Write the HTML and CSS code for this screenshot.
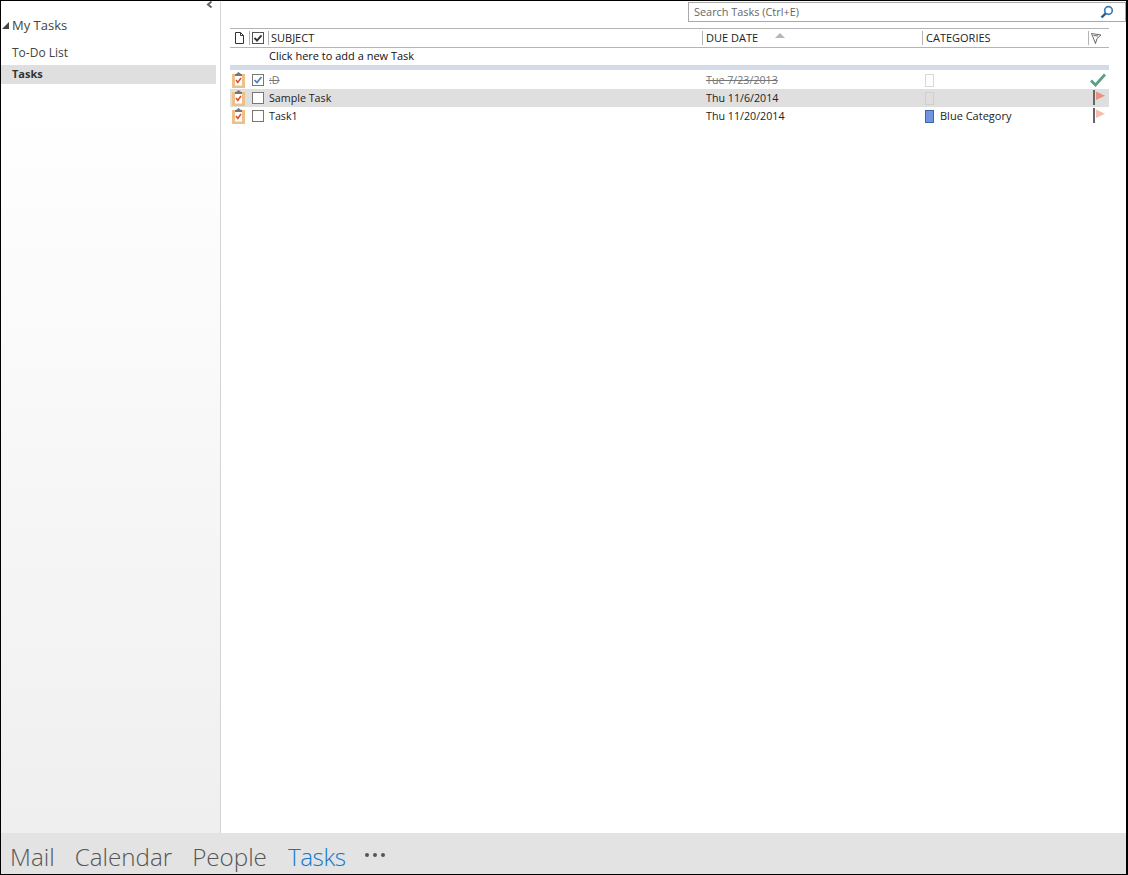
FILE: index.html
```html
<!DOCTYPE html>
<html lang="en">
<head>
    <meta charset="UTF-8">
    <title>Tasks</title>
    <link rel="stylesheet" href="styles.css">
</head>
<body>
    <div class="app">
        <div class="content">
            <aside class="sidebar">
                <div class="collapse-row">
                    <svg width="7" height="7" viewBox="0 0 7 7"><path d="M5.5 0.5 L2 3.5 L5.5 6.5" fill="none" stroke="#666" stroke-width="2"/></svg>
                </div>
                <div class="folder-title">
                    <svg width="7" height="7" viewBox="0 0 7 7"><path d="M0 7 L7 7 L7 0 Z" fill="#444"/></svg>
                    <span>My Tasks</span>
                </div>
                <div class="folder">To-Do List</div>
                <div class="folder active">Tasks</div>
            </aside>
            <main class="main">
                <div class="search-row">
                    <div class="search-box">
                        <span class="search-text">Search Tasks (Ctrl+E)</span>
                        <svg width="14" height="14" viewBox="0 0 14 14"><circle cx="8.5" cy="5.5" r="3.8" fill="none" stroke="#3f7cb5" stroke-width="1.7"/><path d="M5.7 8.3 L1.5 12.5" stroke="#1f5f9e" stroke-width="2.4"/></svg>
                    </div>
                </div>
                <div class="task-table">
                    <div class="row head">
                        <div class="cell cell-icon">
                            <svg width="11" height="12" viewBox="0 0 11 12"><path d="M1.5 0.5 H6.5 L9.5 3.5 V11.5 H1.5 Z M6.5 0.5 V3.5 H9.5" fill="#fff" stroke="#333"/></svg>
                        </div>
                        <div class="cell cell-check sep">
                            <svg width="12" height="12" viewBox="0 0 12 12"><rect x="0.5" y="0.5" width="11" height="11" fill="#fff" stroke="#555"/><path d="M2.5 6 L5 8.5 L9.5 3.3" fill="none" stroke="#333" stroke-width="1.9"/></svg>
                        </div>
                        <div class="cell cell-subject sep">SUBJECT</div>
                        <div class="cell cell-due sep">DUE DATE
                            <svg class="sort" width="10" height="5" viewBox="0 0 10 5"><path d="M0 5 L5 0 L10 5 Z" fill="#b4b6bb"/></svg>
                        </div>
                        <div class="cell cell-cat sep">CATEGORIES</div>
                        <div class="cell cell-flag sep">
                            <svg width="11" height="11" viewBox="0 0 11 11"><path d="M0.5 0.5 L10 2 L6 5.5 L4.5 10.5 Z M2.5 2.5 L7 3" fill="#fff" stroke="#444" stroke-width="0.8"/></svg>
                        </div>
                    </div>
                    <div class="add-row">Click here to add a new Task</div>
                    <div class="band"></div>
                    <div class="row task done">
                        <div class="cell cell-icon"><svg width="13" height="16" viewBox="0 0 13 16"><use href="#task-icon"/></svg></div>
                        <div class="cell cell-check"><span class="check"><svg width="10" height="10" viewBox="0 0 10 10"><path d="M1.5 5 L4 7.5 L8.5 2" fill="none" stroke="#4a7ebb" stroke-width="1.7"/></svg></span></div>
                        <div class="cell cell-subject">:D</div>
                        <div class="cell cell-due">Tue 7/23/2013</div>
                        <div class="cell cell-cat"><span class="swatch"></span></div>
                        <div class="cell cell-flag done-mark">
                            <svg width="16" height="14" viewBox="0 0 16 14"><path d="M1 7.5 L5.5 12 L15 1.5" fill="none" stroke="#5b9f84" stroke-width="2.8"/></svg>
                        </div>
                    </div>
                    <div class="row task selected">
                        <div class="cell cell-icon"><svg width="13" height="16" viewBox="0 0 13 16"><use href="#task-icon"/></svg></div>
                        <div class="cell cell-check"><span class="check"></span></div>
                        <div class="cell cell-subject">Sample Task</div>
                        <div class="cell cell-due">Thu 11/6/2014</div>
                        <div class="cell cell-cat"><span class="swatch"></span></div>
                        <div class="cell cell-flag">
                            <svg width="13" height="16" viewBox="0 0 13 16"><rect x="0" y="0" width="2" height="15" fill="#666"/><path d="M3 1.5 L12 5.8 L3 10 Z" fill="#e8927f"/></svg>
                        </div>
                    </div>
                    <div class="row task">
                        <div class="cell cell-icon"><svg width="13" height="16" viewBox="0 0 13 16"><use href="#task-icon"/></svg></div>
                        <div class="cell cell-check"><span class="check"></span></div>
                        <div class="cell cell-subject">Task1</div>
                        <div class="cell cell-due">Thu 11/20/2014</div>
                        <div class="cell cell-cat"><span class="swatch blue"></span><span class="cat-name">Blue Category</span></div>
                        <div class="cell cell-flag">
                            <svg width="13" height="16" viewBox="0 0 13 16"><rect x="0" y="0" width="2" height="15" fill="#666"/><path d="M3 1.5 L12 5.8 L3 10 Z" fill="#f5bdb0"/></svg>
                        </div>
                    </div>
                </div>
            </main>
        </div>
        <nav class="bottom-nav">
            <span>Mail</span>
            <span>Calendar</span>
            <span>People</span>
            <span class="current">Tasks</span>
            <span class="more"><i></i><i></i><i></i></span>
        </nav>
    </div>

    <svg class="defs" width="0" height="0">
        <symbol id="task-icon" viewBox="0 0 13 16">
            <rect x="0" y="2" width="13" height="14" fill="#ecc088"/>
            <rect x="3" y="4" width="7" height="9.5" fill="#fff"/>
            <path d="M4 2 L6.5 0 L9 2 Z" fill="#777"/>
            <rect x="3" y="2" width="7" height="2" fill="#777"/>
            <path d="M4 8 L5.8 10.5 L9 6" fill="none" stroke="#d9502e" stroke-width="1.6"/>
        </symbol>
    </svg>
</body>
</html>
```

FILE: styles.css
```css
html, body { margin: 0; padding: 0; }
body { font-family: "Open Sans", "Noto Sans", sans-serif; font-size: 11px; color: #222; background-color: #fff; }
.app { width: 1128px; height: 875px; box-sizing: border-box; border: 1px solid #000; border-width: 1px 2px 1px 1px; display: flex; flex-direction: column; overflow: hidden; }
.content { flex: 1; display: flex; min-height: 0; }
.defs { position: absolute; }

.sidebar { width: 220px; box-sizing: border-box; border-right: 1px solid #d4d4d4; background: linear-gradient(#fff 0, #fff 12%, #efefef 100%); }
.collapse-row { height: 9px; display: flex; justify-content: flex-end; padding-right: 7px; }
.collapse-row svg { display: block; }
.folder-title { display: flex; align-items: center; gap: 3px; height: 20px; margin-top: 5px; padding-left: 1px; font-size: 13px; color: #444; }
.folder { height: 19px; line-height: 19px; padding-left: 11px; margin-right: 4px; font-size: 12px; color: #444; }
.folder-title + .folder { margin-top: 8px; margin-bottom: 3px; }
.folder.active { background-color: #dfdfdf; font-weight: bold; font-size: 11px; line-height: 17px; color: #333; }

.main { flex: 1; min-width: 0; }
.search-row { display: flex; justify-content: flex-end; padding-top: 1px; height: 27px; box-sizing: border-box; }
.search-box { width: 438px; height: 20px; box-sizing: border-box; border: 1px solid #a9a9a9; display: flex; align-items: center; justify-content: space-between; padding: 0 11px 0 5px; color: #666; font-size: 10.9px; }
.search-text { padding-bottom: 2px; }

.task-table { width: 879px; margin-left: 9px; }
.row { display: grid; grid-template-columns: 19px 19px 434px 220px 166px 21px; align-items: center; }
.cell { display: flex; align-items: center; height: 100%; box-sizing: border-box; white-space: nowrap; }
.head { height: 20px; border-top: 1px solid #b4b4b4; border-bottom: 1px solid #b4b4b4; box-sizing: border-box; color: #222; font-size: 11px; }
.head .cell { padding-left: 3px; }
.head .cell-subject, .head .cell-due, .head .cell-cat { padding-bottom: 2px; }
.sep { position: relative; }
.sep::before { content: ""; position: absolute; left: 0; top: 2px; bottom: 2px; width: 1px; background-color: #b4b4b4; }
.head .cell-icon { padding-left: 4px; }
.head .cell-due, .head .cell-cat { padding-left: 4px; }
.sort { margin-left: 17px; margin-bottom: 3px; }

.add-row { height: 17px; line-height: 15px; padding-left: 39px; color: #111; font-size: 11px; box-sizing: border-box; }
.band { height: 5px; background-color: #d3dbe8; margin-bottom: 1px; }

.task { height: 18px; font-size: 10.7px; color: #222; }
.task .cell-icon { padding-left: 2px; }
.task .cell-subject { padding-left: 1px; }
.task .cell-due { padding-left: 4px; }
.task .cell-cat { padding-left: 3px; gap: 6px; }
.task .cell-flag { padding-left: 5px; }
.task .cell-flag.done-mark { padding-left: 2px; }
.task.selected { background-color: #dfdfdf; }
.task.done .cell-subject, .task.done .cell-due { color: #777; text-decoration: line-through; }
.check { width: 12px; height: 12px; box-sizing: border-box; border: 1px solid #777; background-color: #fff; margin-left: 3px; display: flex; align-items: center; justify-content: center; }
.swatch { width: 9px; height: 13px; box-sizing: border-box; border: 1px solid #d8d8d8; display: block; }
.selected .swatch { border-color: #cfcfcf; }
.swatch.blue { background-color: #6f94e0; border-color: #3f64ad; }
.cat-name { font-size: 11px; padding-bottom: 2px; }

.bottom-nav { height: 41px; box-sizing: border-box; padding: 6px 0 0 9px; background-color: #e3e3e3; display: flex; align-items: center; gap: 20px; font-size: 24.2px; font-weight: 300; color: #555; flex-shrink: 0; }
.bottom-nav .current { color: #0f78cc; margin-left: 1px; letter-spacing: -0.4px; }
.more { display: flex; gap: 4px; margin-bottom: 4px; margin-left: -1px; }
.more i { width: 4px; height: 4px; border-radius: 50%; background-color: #555; display: block; }
```
